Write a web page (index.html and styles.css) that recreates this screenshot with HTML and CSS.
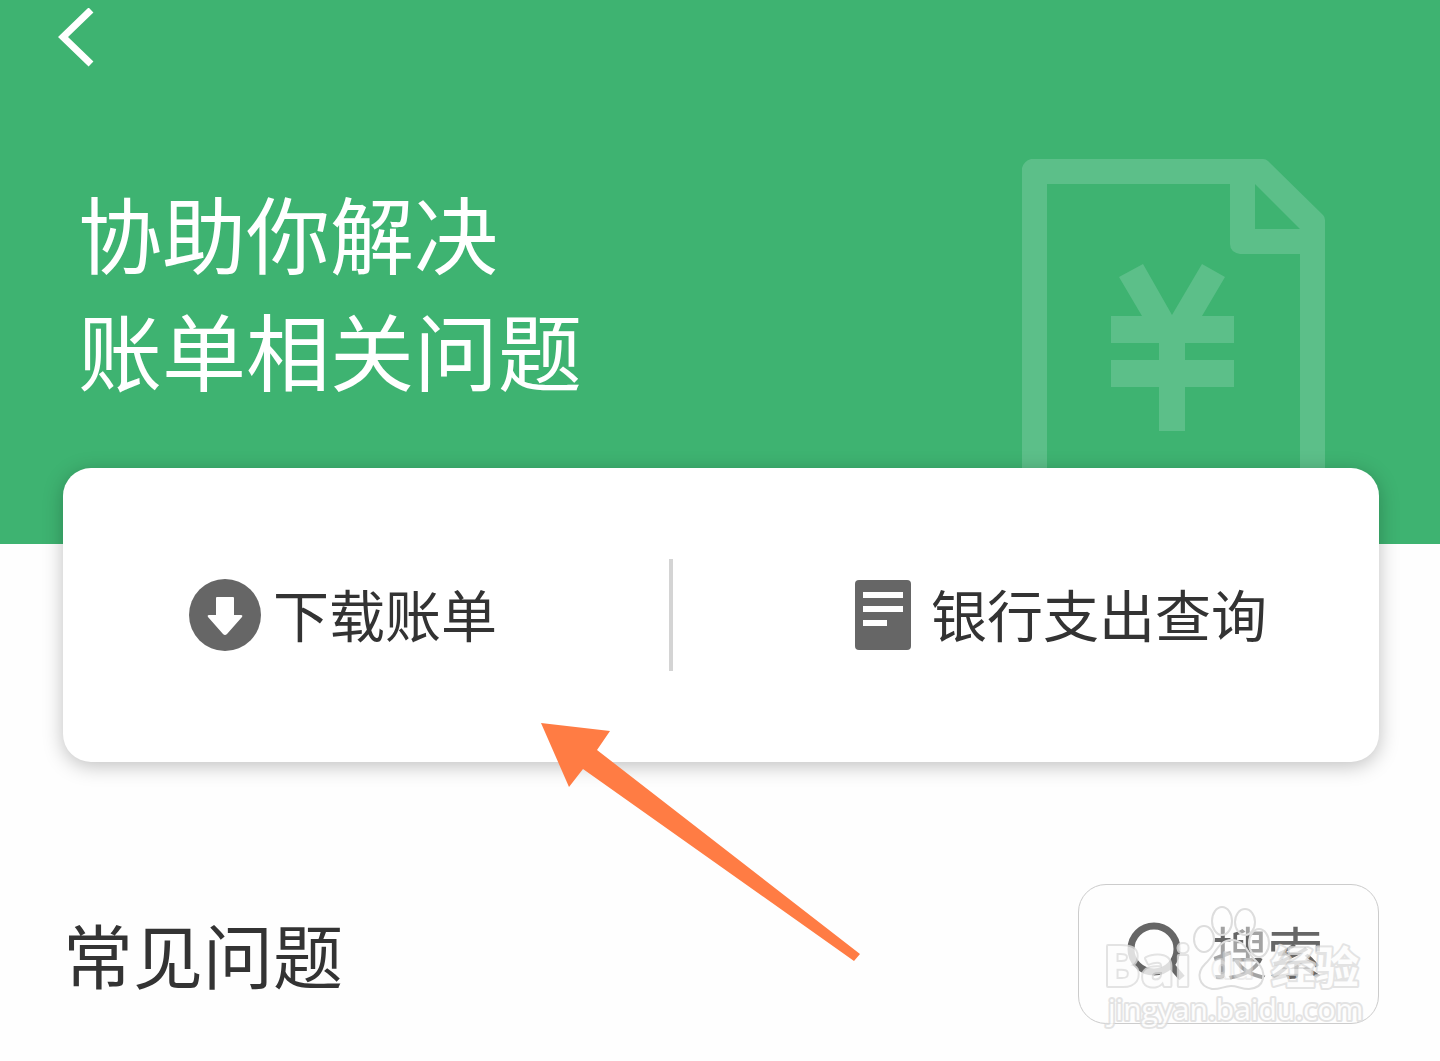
FILE: index.html
```html
<!DOCTYPE html>
<html lang="zh-CN">
<head>
    <meta charset="UTF-8">
    <meta name="viewport" content="width=device-width, initial-scale=1.0">
    <title>账单相关问题</title>
    <link rel="stylesheet" href="styles.css">
</head>
<body>
    <header class="hero">
        <button class="back" type="button" aria-label="返回">
            <svg width="36" height="60" viewBox="0 0 36 60">
                <path d="M33 2L5 29L33 56" fill="none" stroke="#fff" stroke-width="7"/>
            </svg>
        </button>
        <h1>协助你解决<br>账单相关问题</h1>
        <!-- Bill icon behind the card -->
        <svg class="bill-icon" width="303" height="386" viewBox="0 0 303 386">
            <path fill="#5cbf89" fill-rule="evenodd" d="M9 0H241Q244 0 246 2L301 56Q303 58 303 61V386H278V95H218Q208 93 208 85V25H25V386H0V9Q2 2 9 0ZM233 25V70H278Z"/>
            <path fill="#5cbf89" d="M97 118L121 105L150 156L180 105L203 118L180 157H212V184H163V201H212V228H163V272H137V228H89V201H137V184H89V157H120Z"/>
        </svg>
    </header>

    <main>
        <nav class="card">
            <a class="action download" href="#download">
                <svg width="72" height="72" viewBox="0 0 72 72">
                    <circle cx="36" cy="36" r="36" fill="#666"/>
                    <path fill="#fff" d="M28 18H44Q45 18 45 19V36H52Q54 36 53 38L38 55Q36 57 34 55L19 38Q18 36 20 36H27V19Q27 18 28 18Z"/>
                </svg>
                <span>下载账单</span>
            </a>
            <span class="divider"></span>
            <a class="action bank" href="#bank">
                <svg width="56" height="72" viewBox="0 0 56 72">
                    <rect y="1" width="56" height="70" rx="4" fill="#666"/>
                    <path fill="#fff" d="M8 13H48V19H8ZM8 27H48V33H8ZM8 41H32V47H8Z"/>
                </svg>
                <span>银行支出查询</span>
            </a>
        </nav>

        <section class="faq">
            <h2>常见问题</h2>
            <button class="search" type="button">
                <svg width="62" height="62" viewBox="0 0 62 62">
                    <circle cx="28" cy="28" r="23" fill="none" stroke="#666" stroke-width="7"/>
                    <path d="M44 43L56 57" stroke="#666" stroke-width="7"/>
                </svg>
                <span>搜索</span>
            </button>

            <svg class="watermark" width="270" height="128" viewBox="0 0 270 128">
                <g class="paw">
                    <ellipse cx="104" cy="35" rx="10" ry="13"/>
                    <ellipse cx="122" cy="17" rx="10" ry="14"/>
                    <ellipse cx="145" cy="18" rx="10" ry="13"/>
                    <ellipse cx="159" cy="39" rx="10" ry="14"/>
                    <path d="M132 36C145 36 147 49 156 57C168 68 165 84 149 85C141 85 138 82 131 82C124 82 119 86 112 85C98 82 96 69 105 60C116 50 118 36 132 36Z"/>
                </g>
                <text class="mark-logo" x="3" y="82">Bai</text>
                <text class="mark-du" x="112" y="74">du</text>
                <text class="mark-cn" x="171" y="80">经验</text>
                <text class="mark-url" x="8" y="116">jingyan.baidu.com</text>
            </svg>
        </section>
    </main>

    <svg class="pointer" width="320" height="240" viewBox="0 0 320 240">
        <path fill="#ff7c44" d="M0 0L69 8L56 27L319 231L313 238L42 46L28 64Z"/>
    </svg>
</body>
</html>
```
FILE: styles.css
```css
* {
    margin: 0;
    padding: 0;
    box-sizing: border-box;
}

body {
    position: relative;
    font-family: "Noto Sans CJK SC", sans-serif;
    background: #fefefe;
    color: #333;
}

button {
    background: none;
    border: none;
    font-family: inherit;
    cursor: pointer;
}

h1,
h2 {
    font-weight: normal;
}

/* Green header */
.hero {
    position: relative;
    overflow: hidden;
    padding: 8px 58px 137px;
    background: #3eb371;
}

.back,
.back svg {
    display: block;
}

.hero h1 {
    margin: 105px 0 0 20px;
    font-size: 84px;
    line-height: 117px;
    color: #fff;
}

.bill-icon {
    position: absolute;
    top: 159px;
    right: 115px;
}

/* Actions */
.card {
    position: relative;
    display: grid;
    grid-template-columns: 6fr 4px 7fr;
    align-items: center;
    height: 294px;
    margin: -76px 61px 0 63px;
    background: #fff;
    border-radius: 28px;
    box-shadow: 0 4px 20px rgba(0, 0, 0, 0.25);
}

.action {
    display: flex;
    align-items: center;
    font-size: 56px;
    line-height: 80px;
    color: #333;
    text-decoration: none;
}

.action span,
.search span {
    padding-bottom: 4px;
}

.download {
    gap: 12px;
    padding-left: 126px;
}

.bank {
    justify-content: flex-end;
    gap: 20px;
    padding-right: 112px;
}

.divider {
    height: 112px;
    background: #d4d4d4;
}

/* Common questions */
.faq {
    position: relative;
    display: flex;
    align-items: center;
    justify-content: space-between;
    margin: 122px 61px 36px 63px;
}

.faq h2 {
    font-size: 70px;
    line-height: 100px;
}

.search {
    display: flex;
    align-items: center;
    justify-content: center;
    gap: 24px;
    width: 301px;
    height: 140px;
    padding: 0 8px 4px 0;
    border: 1px solid #ccc;
    border-radius: 28px;
    font-size: 56px;
    line-height: 80px;
    color: #666;
}

.watermark {
    position: absolute;
    top: 20px;
    right: 9px;
    fill: rgba(255, 255, 255, 0.6);
    stroke: #ddd;
    stroke-width: 2px;
    pointer-events: none;
}

.watermark text {
    paint-order: stroke;
    stroke-width: 4px;
    stroke-linejoin: round;
    fill: #fdfdfd;
    font-family: "Open Sans", "Noto Sans CJK SC", sans-serif;
    opacity: 0.8;
}

.paw {
    fill: rgba(255, 255, 255, 0.4);
}

.watermark .mark-logo {
    font-size: 56px;
    font-weight: bold;
}

.watermark .mark-du {
    font-size: 32px;
    font-weight: bold;
    opacity: 0.5;
}

.watermark .mark-cn {
    font-size: 44px;
    font-weight: bold;
}

.watermark .mark-url {
    font-size: 30px;
}

/* Arrow over the page */
.pointer {
    position: absolute;
    top: 723px;
    left: 541px;
    pointer-events: none;
}
```
